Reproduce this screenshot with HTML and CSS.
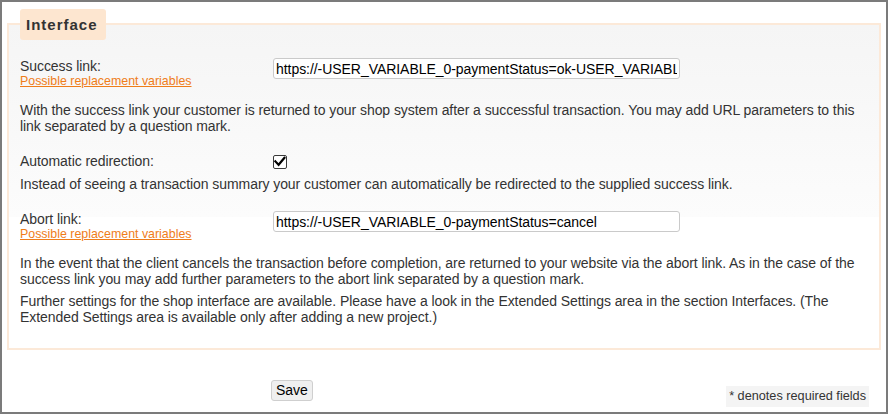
FILE: index.html
```html
<!DOCTYPE html>
<html lang="en">
<head>
<meta charset="utf-8">
<title>Interface</title>
<link rel="stylesheet" href="styles.css">
</head>
<body>
<div class="page">
  <div class="box">
    <div class="box-title">Interface</div>

    <div class="row row-first">
      <div class="label-col">
        <div class="label">Success link:</div>
        <a class="hint" href="#">Possible replacement variables</a>
      </div>
      <div class="field-col">
        <input class="text-input" type="text" value="https://-USER_VARIABLE_0-paymentStatus=ok-USER_VARIABLE_1-">
      </div>
    </div>
    <p class="desc">With the success link your customer is returned to your shop system after a successful transaction. You may add URL parameters to this link separated by a question mark.</p>

    <div class="row row-spaced">
      <div class="label-col">
        <div class="label">Automatic redirection:</div>
      </div>
      <div class="field-col">
        <span class="checkbox" role="checkbox" aria-checked="true">
          <svg width="14" height="14" viewBox="0 0 14 14">
            <rect x="0.5" y="0.5" width="13" height="13" rx="1.5" fill="#fff" stroke="#3a3a3a"/>
            <path d="M2.4 6.4 L5.6 9.8 L11.4 2.8" fill="none" stroke="#000" stroke-width="2.2" stroke-linecap="square" stroke-linejoin="miter"/>
          </svg>
        </span>
      </div>
    </div>
    <p class="desc desc-tight">Instead of seeing a transaction summary your customer can automatically be redirected to the supplied success link.</p>

    <div class="row row-spaced">
      <div class="label-col">
        <div class="label">Abort link:</div>
        <a class="hint" href="#">Possible replacement variables</a>
      </div>
      <div class="field-col">
        <input class="text-input" type="text" value="https://-USER_VARIABLE_0-paymentStatus=cancel">
      </div>
    </div>
    <p class="desc">In the event that the client cancels the transaction before completion, are returned to your website via the abort link. As in the case of the success link you may add further parameters to the abort link separated by a question mark.</p>
    <p class="desc desc-follow">Further settings for the shop interface are available. Please have a look in the Extended Settings area in the section Interfaces. (The Extended Settings area is available only after adding a new project.)</p>
  </div>

  <div class="footer">
    <button class="btn" type="button">Save</button>
    <span class="note">* denotes required fields</span>
  </div>
</div>
</body>
</html>
```

FILE: styles.css
```css
* {
  box-sizing: border-box;
}

html, body {
  margin: 0;
  padding: 0;
  background: #fff;
}

body {
  font-family: "Liberation Sans", Arial, sans-serif;
  font-size: 14px;
  line-height: 16px;
  color: #333;
}

.page {
  width: 888px;
  height: 414px;
  border: 2px solid #7b7b7b;
  padding: 0 5px;
  overflow: hidden;
  background: #fff;
}

.box {
  margin-top: 21px;
  border: 2px solid #fce9d8;
  padding: 0 10px 23px 11px;
  background-color: #fff;
  background-image: linear-gradient(#f5f5f5, #fcfcfc);
  background-size: 100% 192px;
  background-repeat: no-repeat;
}

.box-title {
  width: fit-content;
  margin-top: -16px;
  padding: 7px 8px 7px 6px;
  background: #fde6d0;
  border-radius: 3px;
  font-size: 15px;
  line-height: 17px;
  font-weight: bold;
  letter-spacing: 1px;
  color: #333;
}

.row {
  display: flex;
  align-items: flex-start;
}

.row-first {
  margin-top: 18px;
}

.row-spaced {
  margin-top: 19px;
}

.label-col {
  flex: none;
  width: 253px;
}

.label {
  line-height: 16px;
  letter-spacing: -0.07px;
}

.hint {
  display: block;
  width: fit-content;
  font-size: 12.4px;
  line-height: 15px;
  color: #ef7d1a;
  text-decoration: underline;
}

.field-col {
  flex: 1;
}

.text-input {
  display: block;
  width: 407px;
  height: 21px;
  margin: 0;
  padding: 0 2px;
  border: 1px solid #cacaca;
  border-radius: 3px;
  background: #fff;
  font-family: "Liberation Sans", Arial, sans-serif;
  font-size: 14px;
  letter-spacing: -0.05px;
  color: #000;
  outline: none;
}

.checkbox {
  display: block;
  width: 14px;
  height: 14px;
  margin-top: 2px;
}

.checkbox svg {
  display: block;
}

.desc {
  margin: 13px 0 0;
  letter-spacing: -0.07px;
}

.desc-tight {
  margin-top: 7px;
}

.desc-follow {
  margin-top: 6px;
}

.footer {
  display: flex;
  align-items: flex-start;
  justify-content: space-between;
  margin-top: 30px;
  padding: 0 12px 0 264px;
}

.btn {
  height: 21px;
  margin: 0;
  padding: 0 4px;
  border: 1px solid #cfcfcf;
  border-radius: 3px;
  background: #efefef;
  font-family: "Liberation Sans", Arial, sans-serif;
  font-size: 14px;
  line-height: 19px;
  color: #000;
}

.note {
  margin-top: 6px;
  padding: 0 3px;
  background: #f4f4f4;
  font-size: 12.7px;
  line-height: 21px;
  color: #333;
}
```
